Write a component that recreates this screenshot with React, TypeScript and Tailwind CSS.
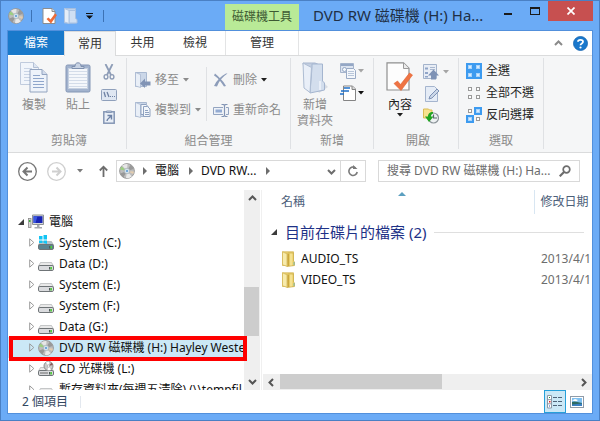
import { type ReactNode } from "react";

type IconProps = { className?: string };

function DiscIcon({ className = "" }: IconProps) {
  return (
    <svg viewBox="0 0 16 16" className={`size-4 shrink-0 ${className}`} aria-hidden="true">
      <circle cx="8" cy="8" r="7.4" fill="#bdbdbd" stroke="#959595" strokeWidth="0.9" />
      <path d="M8 8 3 2.600A7.200 7.200 0 0 1 8.500 1Z" fill="#e6e6e6" />
      <path d="M8 8 12.800 13.500A7.200 7.200 0 0 1 7 15Z" fill="#e9e9e9" />
      <path d="M8 8 11.500 1.800A7.200 7.200 0 0 1 14.800 6Z" fill="#999" />
      <path d="M8 8 1.300 10.500A7.200 7.200 0 0 0 4.500 14.200Z" fill="#979797" />
      <path d="M8 8 1.100 6.500A7 7 0 0 1 2.600 3.500Z" fill="#9ccf80" />
      <path d="M8 8 14.900 8.500A7 7 0 0 1 14.200 11Z" fill="#e3cdb0" />
      <circle cx="8" cy="8" r="2.800" fill="#d5e2ea" stroke="#9aa4aa" strokeWidth="0.6" />
      <circle cx="8" cy="8" r="1.100" fill="#5c9bd6" />
    </svg>
  );
}

function Caret({ className = "" }: IconProps) {
  return (
    <svg viewBox="0 0 6 4" className={`h-1 w-1.5 shrink-0 ${className}`} aria-hidden="true">
      <path d="M0 0h6L3 3.500Z" fill="currentColor" />
    </svg>
  );
}

function CopyIcon() {
  return (
    <svg viewBox="0 0 28 31" className="h-[31px] w-7" aria-hidden="true">
      <path d="M.5.500h13l5 5v17H.500Z" fill="#f1f5fb" stroke="#c0cbdd" />
      <path d="M13.500.500v5h5" fill="#dde5f1" stroke="#b4c1d6" />
      <path d="M4 6.500h8M4 9.500h11M4 12.500h6M4 15.500h6M4 18.500h6" stroke="#c9d4e5" />
      <path d="M10 7.500h12l5 5v17.500H10Z" fill="#eef3fa" stroke="#93a4c0" />
      <path d="M22 7.500v5h5" fill="#d2dcec" stroke="#93a4c0" />
      <path d="M13 13.500h7M13 16.500h11M13 19.500h11M13 22.500h11M13 25.500h11" stroke="#8fa6cb" />
    </svg>
  );
}

function PasteIcon() {
  return (
    <svg viewBox="0 0 26 31" className="h-[31px] w-[26px]" aria-hidden="true">
      <rect x="1" y="3" width="24" height="27" rx="1.500" fill="#a2b3ce" stroke="#8496b5" />
      <rect x="3.500" y="6.500" width="19" height="20" fill="#f4f7fb" stroke="#c5d0e0" />
      <path d="M4 9.500h18M4 12.500h18M4 15.500h18M4 18.500h18M4 21.500h18M4 24.500h18" stroke="#d3dce9" />
      <path d="M7 6.500V4.500h3C10 2 11 .8 13 .8s3 1.200 3 3.700h3v2Z" fill="#c8d3e4" stroke="#7e90ae" />
    </svg>
  );
}

function ScissorsIcon() {
  return (
    <svg viewBox="0 0 16 16" className="size-4" fill="none" aria-hidden="true">
      <path d="M4.500 0 10 11M11.500 0 6 11" stroke="#8e9db7" strokeWidth="1.800" />
      <ellipse cx="5" cy="12.800" rx="1.900" ry="2.200" stroke="#8e9db7" strokeWidth="1.400" />
      <ellipse cx="11" cy="12.800" rx="1.900" ry="2.200" stroke="#8e9db7" strokeWidth="1.400" />
    </svg>
  );
}

function PathIcon() {
  return (
    <svg viewBox="0 0 16 12" className="h-3 w-4" fill="none" aria-hidden="true">
      <rect x=".5" y=".5" width="15" height="11" rx="1" fill="#dfe7f2" stroke="#8fa0bb" />
      <path d="m3 3 1.500 5M6 3l2 5" stroke="#6f82a3" strokeWidth="1.300" />
      <path d="M9 7.500h1M11 7.500h1M13 7.500h1" stroke="#6f82a3" />
    </svg>
  );
}

function ShortcutIcon() {
  return (
    <svg viewBox="0 0 12 14" className="h-3.5 w-3" fill="none" aria-hidden="true">
      <rect x=".8" y="1.800" width="10.400" height="11.400" fill="#e8eef6" stroke="#8597b5" strokeWidth="1.500" />
      <path d="M3.500 2.500V1h5v1.500Z" fill="#c4d0e2" stroke="#8597b5" />
      <path d="M4.500 5.500h4v4M8.200 5.800 6 8c-1.500 1-2 1.500-2 3" stroke="#6d82a6" strokeWidth="1.400" />
    </svg>
  );
}

function MoveToIcon() {
  return (
    <svg viewBox="0 0 16 16" className="size-4 shrink-0" aria-hidden="true">
      <path d="M.5.500h11v14H.500Z" fill="#cbd7e8" stroke="#a9b9d1" />
      <path d="m.5.500 5 2v13l-5-1.500Z" fill="#e9eff7" stroke="#a9b9d1" strokeWidth=".8" />
      <path d="M5 11.500 10 6.500v3h5.500v4H10v2.500Z" fill="#8194b5" />
    </svg>
  );
}

function CopyToIcon() {
  return (
    <svg viewBox="0 0 16 16" className="size-4 shrink-0" aria-hidden="true">
      <path d="M.5.500h11v14H.500Z" fill="#cbd7e8" stroke="#a9b9d1" />
      <path d="m.5.500 5 2v13l-5-1.500Z" fill="#e9eff7" stroke="#a9b9d1" strokeWidth=".8" />
      <path d="M6 2.500h5l2 2v8H6Z" fill="#f5f8fc" stroke="#8fa2c0" />
      <path d="M8.500 4.500h4l2.500 2.500v7.500H8.500Z" fill="#f2f6fb" stroke="#8fa2c0" />
      <path d="M10 8.500h3M10 10.500h4M10 12.500h4" stroke="#8fa2c0" />
    </svg>
  );
}

function DeleteIcon() {
  return (
    <svg viewBox="0 0 16 16" className="size-4 shrink-0" aria-hidden="true">
      <path d="M2 1.500C5 4 10 8.500 13 14l-2 .5C8 9.500 4 5 1 3.500Z" fill="#8d9dba" />
      <path d="M14.500 1.500C10 4.500 6 9 4 14.500l-3-.5C3.500 8.500 8 4 13 1.500Z" fill="#8d9dba" />
    </svg>
  );
}

function RenameIcon() {
  return (
    <svg viewBox="0 0 16 13" className="h-[13px] w-4 shrink-0" fill="none" aria-hidden="true">
      <path d="M10 3.500H.500v7H10M13 3.500h2.500v7H13" fill="#eef2f8" stroke="#93a4c0" />
      <path d="M2.500 5.500H9v3H2.500Z" fill="#93abd2" />
      <path d="M8.500 .5h2l1 1 1-1h2M11.500 1v11M8.500 12.500h2l1-1 1 1h2" stroke="#8295b5" strokeWidth="1.200" />
    </svg>
  );
}

function NewFolderIcon() {
  return (
    <svg viewBox="0 0 27 33" className="h-[33px] w-[27px]" aria-hidden="true">
      <path d="m17 31 9-6-3-3-8 5Z" fill="#d8dce3" />
      <path d="M1 1h12l7 3v23l-14 2Z" fill="#c3cfe1" stroke="#a7b6ce" />
      <path d="M10 5V2h10.500v17l2 2v7L8 31Z" fill="#d3deed" stroke="#a4b5cf" />
      <path d="m1 1 8.500 4.500-1.500 25L2 26Z" fill="#e9eff8" stroke="#aebdd3" />
      <path d="M18 19v9" stroke="#f0f5fb" strokeWidth="1.500" />
    </svg>
  );
}

function NewItemIcon() {
  return (
    <svg viewBox="0 0 16 16" className="size-4 shrink-0" aria-hidden="true">
      <path d="M.5.500h13v9H.500Z" fill="#dce4f0" stroke="#a5b4cc" />
      <path d="M1 2h12" stroke="#94a7c5" strokeWidth="2" />
      <circle cx="4.500" cy="6.500" r="2" fill="#f5f8fb" stroke="#94a7c5" />
      <path d="M6.500 5.500h7l2 2v8h-9Z" fill="#f4f7fb" stroke="#9aabc6" />
      <path d="M8 8.500h6M8 10.500h6M8 12.500h6" stroke="#b8c6da" />
    </svg>
  );
}

function EasyAccessIcon() {
  return (
    <svg viewBox="0 0 16 16" className="size-4 shrink-0" aria-hidden="true">
      <path d="M3.500 1h9l3 3v11.500h-12Z" fill="#fff" stroke="#848484" />
      <path d="M12 1v3.500h3.500" fill="#d9d9d9" stroke="#848484" />
      <path d="M4 3h6M1 6h8M0 9h4" stroke="#1c6fc9" strokeWidth="1.600" />
    </svg>
  );
}

function PropertiesIcon() {
  return (
    <svg viewBox="0 0 28 30" className="h-[30px] w-7" aria-hidden="true">
      <path d="M1 .800h16.500l5.500 5.500V28H1Z" fill="#fdfdfd" stroke="#8f8f8f" strokeWidth="1.200" />
      <path d="M17.500 1v5.500H23" fill="#ececec" stroke="#9b9b9b" />
      <path d="M8 21.500 11.500 19l3 3.500L23.500 11l3 2L15 28.500Z" fill="#ee7444" stroke="#e2622f" strokeWidth=".6" />
    </svg>
  );
}

function OpenIcon() {
  return (
    <svg viewBox="0 0 16 16" className="size-4 shrink-0" aria-hidden="true">
      <path d="M.5.500h13v14H.500Z" fill="#e8edf5" stroke="#a3b3cb" />
      <path d="M2 3.500h3v2H2ZM2 8h3v2H2ZM2 12h3v1.500H2Z" fill="#90a5c8" />
      <path d="M7 3.500h5M7 5.500h5" stroke="#a9b8d0" />
      <path d="m10.500 5.500 5.500 6h-3v4H8v-4H5Z" fill="#7e92b5" />
    </svg>
  );
}

function EditIcon() {
  return (
    <svg viewBox="0 0 16 16" className="size-4 shrink-0" aria-hidden="true">
      <path d="M2.500.500h9l3 3v12h-12Z" fill="#e5ecf6" stroke="#a5b5ce" />
      <path d="m6 13 1-3 7-7 2 2-7 7Z" fill="#cbd7e8" stroke="#7e92b5" />
    </svg>
  );
}

function HistoryIcon() {
  return (
    <svg viewBox="0 0 16 16" className="size-4 shrink-0" aria-hidden="true">
      <path d="M.5 1h5l1 1H9v8H.500Z" fill="#f7e28f" stroke="#d9bb54" />
      <circle cx="10.500" cy="10" r="5" fill="#eef1f3" stroke="#8b9499" strokeWidth="1.200" />
      <path d="M10.500 6.500V10H14" fill="none" stroke="#5c676e" strokeWidth="1.200" />
      <path d="M10 4C6.500 4 5 6 5 8.500H2L6 14l4.500-5.500H8C8 7 8.500 6 10 5.500Z" fill="#20a520" />
    </svg>
  );
}

function SelectIcon({ on }: { on: [boolean, boolean, boolean, boolean] }) {
  const spots = [[0, 0], [8, 0], [0, 8], [8, 8]];
  return (
    <svg viewBox="0 0 16 16" className="size-4 shrink-0" aria-hidden="true">
      {spots.map(([x, y], i) => (
        <g key={i}>
          {on[i] ? <rect x={x} y={y} width="8" height="8" fill="#3d9bf0" /> : null}
          <rect x={x + 2.5} y={y + 2.5} width="3" height="3" fill={on[i] ? "#d8ecff" : "#fff"} stroke={on[i] ? "#a9d4fb" : "#9a9a9a"} />
        </g>
      ))}
    </svg>
  );
}

function ComputerIcon() {
  return (
    <svg viewBox="0 0 16 16" className="size-4 shrink-0" aria-hidden="true">
      <rect x=".5" y="4.500" width="2.500" height="9" fill="#d9d9d9" stroke="#8a8a8a" strokeWidth=".8" />
      <path d="M1 6h1.500v2H1Z" fill="#3db53d" />
      <path d="M4.500 1h11v9.500h-11Z" fill="#d4d7da" stroke="#8d9296" />
      <path d="M5.500 2.200h9V9h-9Z" fill="#1723b5" />
      <path d="M5.500 2.200h4L7.500 9h-2Z" fill="#3a57df" />
      <path d="M9 11h2.500v2H14v1.500H6.500V13H9Z" fill="#a5a9ad" />
    </svg>
  );
}

function DriveIcon({ kind }: { kind: "system" | "data" | "cd" | "net" }) {
  return (
    <svg viewBox="0 0 16 16" className="size-4 shrink-0" aria-hidden="true">
      <path d="M2.500 6.500h11l2 3.500H.500Z" fill={kind === "system" ? "#b7c5cb" : "#e9e9e9"} stroke="#a4a8aa" strokeWidth=".6" />
      <rect x=".5" y="9.500" width="15" height="5" rx="1.400" fill={kind === "system" ? "#5b8390" : "#dadbde"} stroke="#6f7477" />
      <path d="M11 11h1.500v2.500H11Z" fill="#4d5b57" />
      <path d="M12.500 11H14v2.500h-1.500Z" fill="#4fd436" />
      {kind === "system" ? <path d="M1 1h3.500v3.500H1ZM5.500 0h3.500v4.500H5.500ZM1 5.500h3.500V8H1ZM5.500 5.500h3.500V9L5.500 8Z" fill="#13c4f4" /> : null}
      {kind === "cd" ? (
        <g>
          <circle cx="10.500" cy="5" r="4.500" fill="#c9c9c9" stroke="#8b8b8b" />
          <path d="M10.500 5 8 1.200a4.500 4.500 0 0 1 3.500-.5ZM10.500 5l2.500 3.700a4.500 4.500 0 0 1-3.500.5Z" fill="#fff" />
          <path d="M10.500 5 13.500 1.700a4.500 4.500 0 0 1 1.300 2.300Z" fill="#8a5a5a" />
          <circle cx="10.500" cy="5" r="1.200" fill="#fff" stroke="#999" strokeWidth=".6" />
          <path d="M2 12h8" stroke="#6c6c6c" />
        </g>
      ) : null}
    </svg>
  );
}

function FolderIcon() {
  return (
    <svg viewBox="0 0 13 16" className="h-4 w-[13px] shrink-0" aria-hidden="true">
      <path d="M.5.800h11v13.700H.500Z" fill="#e9cf6c" stroke="#d5b654" strokeWidth=".8" />
      <path d="M6 2h5.500v8l1 1v3.500L5 15.500Z" fill="#f0d776" stroke="#cdb050" strokeWidth=".8" />
      <path d="m.5.800 4.500 2v12.500l-4.500-1.500Z" fill="#f7ebac" stroke="#d5b959" strokeWidth=".8" />
      <path d="M6.500 3v12" stroke="#cba63c" strokeWidth="1.500" />
      <path d="M9 2.500v12" stroke="#f9ecae" />
      <path d="M12 11v3" stroke="#7db5a5" />
    </svg>
  );
}

function Chevron({ dir }: { dir: "up" | "down" | "left" | "right" }) {
  const paths = { up: "M1 6 4.500 2.500 8 6", down: "M1 3l3.500 3.500L8 3", left: "M6 1 2.500 4.500 6 8", right: "M3 1l3.500 3.500L3 8" };
  return (
    <svg viewBox="0 0 9 9" className="size-[9px] shrink-0" aria-hidden="true">
      <path d={paths[dir]} fill="none" stroke="currentColor" strokeWidth="2" />
    </svg>
  );
}

function Crumb() {
  return (
    <svg viewBox="0 0 4 8" className="h-2 w-1 shrink-0" aria-hidden="true">
      <path d="M0 0v8l4-4Z" fill="#6d6d6d" />
    </svg>
  );
}

function OpenTriangle() {
  return (
    <svg viewBox="0 0 6 6" className="size-1.5 shrink-0" aria-hidden="true">
      <path d="M6 0v6H0Z" fill="#3c3c3c" />
    </svg>
  );
}

function Group({ label, className, children }: { label: string; className: string; children: ReactNode }) {
  return (
    <section aria-label={label} className={`flex shrink-0 flex-col border-r border-[#dfe1e4] ${className}`}>
      <div className="flex flex-1">{children}</div>
      <div className="text-center leading-4 text-[#8b8b8b]">{label}</div>
    </section>
  );
}

function BigButton({ icon, disabled = true, children }: { icon: ReactNode; disabled?: boolean; children: ReactNode }) {
  return (
    <button disabled={disabled} className="flex w-11 shrink-0 flex-col items-center self-start pt-1 leading-4 text-[#1e1e1e] disabled:text-[#8b8b8b]">
      <span className="flex h-[35px] items-start">{icon}</span>
      {children}
    </button>
  );
}

function TextButton({ icon, caret, disabled = true, children }: { icon: ReactNode; caret?: ReactNode; disabled?: boolean; children: ReactNode }) {
  return (
    <button disabled={disabled} className="flex items-center gap-1 whitespace-nowrap text-[#1e1e1e] disabled:text-[#8b8b8b]">
      {icon}
      {children}
      {caret}
    </button>
  );
}

const drives: { name: string; icon: ReactNode; selected?: boolean }[] = [
  { name: "System (C:)", icon: <DriveIcon kind="system" /> },
  { name: "Data (D:)", icon: <DriveIcon kind="data" /> },
  { name: "System (E:)", icon: <DriveIcon kind="data" /> },
  { name: "System (F:)", icon: <DriveIcon kind="data" /> },
  { name: "Data (G:)", icon: <DriveIcon kind="data" /> },
  { name: "DVD RW 磁碟機 (H:) Hayley Weste", icon: <DiscIcon />, selected: true },
  { name: "CD 光碟機 (L:)", icon: <DriveIcon kind="cd" /> },
  { name: "暫存資料夾(每週五清除) (\\\\tempfil", icon: <DriveIcon kind="net" /> },
];

const files = ["AUDIO_TS", "VIDEO_TS"];

function TitleBar() {
  return (
    <header className="flex h-[29px] shrink-0">
      <div className="flex w-[218px] shrink-0 items-center pl-px">
        <DiscIcon />
        <span className="ml-[7px] h-3 w-px bg-[#3c72b5]" />
        <button aria-label="內容" className="ml-2.5">
          <svg viewBox="0 0 16 16" className="size-4" aria-hidden="true">
            <path d="M1 .500h9l3 3v12H1Z" fill="#fff" stroke="#8d8d8d" />
            <path d="M10 .500v3h3" fill="#ddd" stroke="#8d8d8d" />
            <path d="m4.500 11 2-1.500 2 2L13 5.500l2 1.500-6 8.500Z" fill="#ee6b38" />
          </svg>
        </button>
        <button aria-label="新增資料夾" className="ml-1.5">
          <svg viewBox="0 0 14 16" className="h-4 w-3.5" aria-hidden="true">
            <path d="M.5.500h11V15H.500Z" fill="#c0d3ec" stroke="#a6bfe0" />
            <path d="M5 2.500h6.500v8l1.500 1V15H5Z" fill="#cfdff3" stroke="#a9c1e1" />
            <path d="m.5.500 4.500 2v13l-4.500-1.500Z" fill="#e4edf8" stroke="#adc4e2" />
          </svg>
        </button>
        <button aria-label="自訂快速存取工具列" className="ml-2">
          <svg viewBox="0 0 7 6" className="h-1.5 w-[7px]" aria-hidden="true">
            <path d="M0 0h7v1H0ZM0 2.500h7L3.500 6Z" fill="#111" />
          </svg>
        </button>
        <span className="ml-2.5 h-3 w-px bg-[#3c72b5]" />
      </div>
      <div className="mt-[3px] flex w-[74px] shrink-0 items-center justify-center bg-[#b9ea97] text-[#3d5a33]">磁碟機工具</div>
      <h1 className="min-w-0 flex-1 overflow-hidden pl-3.5 text-[15px] leading-[29px] whitespace-nowrap text-[#1f2f45]">DVD RW 磁碟機 (H:) Ha...</h1>
      <button aria-label="最小化" className="flex h-5 w-[27px] shrink-0 items-end justify-center pb-1.5">
        <span className="h-0.5 w-2 bg-[#1b1b1b]" />
      </button>
      <button aria-label="最大化" className="flex h-5 w-[27px] shrink-0 items-center justify-center">
        <span className="h-2 w-2.5 border border-t-2 border-[#1b1b1b]" />
      </button>
      <button aria-label="關閉" className="flex h-5 w-[45px] shrink-0 items-center justify-center bg-[#c75050]">
        <svg viewBox="0 0 8 8" className="size-2" aria-hidden="true">
          <path d="m.5.500 7 7M7.500.500l-7 7" stroke="#fff" strokeWidth="1.700" />
        </svg>
      </button>
    </header>
  );
}

function Tabs() {
  return (
    <nav className="flex h-[25px] shrink-0 text-[#333]">
      <button className="h-6 w-14 bg-[#1979ca] text-white">檔案</button>
      <button className="w-[52px] border border-b-0 border-[#dadbdc] bg-[#f5f6f7]">常用</button>
      <div className="flex flex-1 border-b border-[#dadbdc]">
        <button className="w-[53px]">共用</button>
        <button className="mr-1 w-[52px]">檢視</button>
        <button className="w-[74px] border-x border-[#e3e4e5]">管理</button>
        <div className="ml-auto flex items-center gap-2.5 pr-1">
          <button aria-label="最小化功能區" className="text-[#8a8a8a]"><Chevron dir="up" /></button>
          <button aria-label="說明">
            <svg viewBox="0 0 15 15" className="size-[15px]" aria-hidden="true">
              <circle cx="7.500" cy="7.500" r="7" fill="#1a78cc" stroke="#1565b0" strokeWidth=".8" />
              <path d="M5 5.800C5 3.200 10 3.200 10 5.800c0 1.700-2.500 1.600-2.500 3.500" fill="none" stroke="#fff" strokeWidth="1.800" />
              <circle cx="7.500" cy="11.500" r="1.100" fill="#fff" />
            </svg>
          </button>
        </div>
      </div>
    </nav>
  );
}

function Ribbon() {
  return (
    <div className="flex h-[97px] shrink-0 overflow-hidden border-b border-[#dadbdc] bg-[#f5f6f7] pt-0.5 pb-[3px]">
      <Group label="剪貼簿" className="w-[119px] pl-1">
        <BigButton icon={<CopyIcon />}>複製</BigButton>
        <BigButton icon={<PasteIcon />}>貼上</BigButton>
        <div className="flex w-[18px] flex-col items-center gap-[9px] pt-1.5">
          <button disabled aria-label="剪下"><ScissorsIcon /></button>
          <button disabled aria-label="複製路徑"><PathIcon /></button>
          <button disabled aria-label="貼上捷徑"><ShortcutIcon /></button>
        </div>
      </Group>
      <Group label="組合管理" className="w-[164px]">
        <div className="grid w-[79px] shrink-0 grid-rows-[30px_30px] pt-[7px] pl-2">
          <TextButton icon={<MoveToIcon />} caret={<Caret />}>移至</TextButton>
          <TextButton icon={<CopyToIcon />} caret={<Caret />}>複製到</TextButton>
        </div>
        <span className="mt-[9px] h-[54px] w-px shrink-0 bg-[#dfe1e4]" />
        <div className="grid grid-rows-[30px_30px] pt-[7px] pl-1.5">
          <TextButton disabled={false} icon={<DeleteIcon />} caret={<Caret />}>
            <span className="text-[#8b8b8b]">刪除</span>
          </TextButton>
          <TextButton icon={<RenameIcon />}>重新命名</TextButton>
        </div>
      </Group>
      <Group label="新增" className="w-[83px]">
        <div className="pl-0.5">
          <BigButton icon={<NewFolderIcon />}>
            新增
            <br />
            資料夾
          </BigButton>
        </div>
        <div className="flex flex-col gap-1.5 pt-[5px] pl-[3px]">
          <button disabled aria-label="新增項目" className="flex items-center gap-0.5 text-[#a5a5a5]"><NewItemIcon /><Caret /></button>
          <button aria-label="輕鬆存取" className="flex items-center gap-0.5"><EasyAccessIcon /><Caret /></button>
        </div>
      </Group>
      <Group label="開啟" className="w-[85px] pl-1">
        <BigButton disabled={false} icon={<PropertiesIcon />}>
          <span>內容</span>
          <Caret />
        </BigButton>
        <div className="flex flex-col gap-1.5 pt-1.5 pl-px">
          <button disabled aria-label="開啟" className="flex items-center gap-1 text-[#a5a5a5]"><OpenIcon /><Caret /></button>
          <button disabled aria-label="編輯"><EditIcon /></button>
          <button aria-label="歷程記錄"><HistoryIcon /></button>
        </div>
      </Group>
      <Group label="選取" className="w-[85px]">
        <div className="grid grid-rows-[22px_22px_22px] pt-0.5 pl-[7px]">
          <TextButton disabled={false} icon={<SelectIcon on={[true, true, true, true]} />}>全選</TextButton>
          <TextButton disabled={false} icon={<SelectIcon on={[false, false, false, false]} />}>全部不選</TextButton>
          <TextButton disabled={false} icon={<SelectIcon on={[false, true, true, false]} />}>反向選擇</TextButton>
        </div>
      </Group>
    </div>
  );
}

function AddressBar() {
  return (
    <div className="flex shrink-0 items-center pt-[7px] pr-3 pb-2 pl-2.5">
      <button aria-label="上一頁">
        <svg viewBox="0 0 19 19" className="size-[19px]" fill="none" stroke="#767676" aria-hidden="true">
          <circle cx="9.500" cy="9.500" r="8.800" strokeWidth="1.300" />
          <path d="M14 9.500H6M9.500 5.500l-4 4 4 4" strokeWidth="2" />
        </svg>
      </button>
      <button aria-label="下一頁" disabled className="ml-2.5">
        <svg viewBox="0 0 19 19" className="size-[19px]" fill="none" stroke="#cfcfcf" aria-hidden="true">
          <circle cx="9.500" cy="9.500" r="8.800" strokeWidth="1.300" />
          <path d="M5 9.500h8M9.500 5.500l4 4-4 4" strokeWidth="2" />
        </svg>
      </button>
      <button aria-label="最近的位置" className="ml-[11px] text-[#7a7a7a]"><Caret /></button>
      <button aria-label="上移" className="ml-4">
        <svg viewBox="0 0 9 12" className="h-3 w-[9px]" fill="none" stroke="#6d6d6d" aria-hidden="true">
          <path d="M4.500 12V1.500M.800 5.500 4.500 1.700l3.700 3.800" strokeWidth="1.800" />
        </svg>
      </button>
      <div className="ml-2 flex h-[22px] min-w-0 flex-1 items-center border border-[#d9d9d9] pl-0.5">
        <DiscIcon />
        <span className="ml-2 flex items-center"><Crumb /></span>
        <button className="ml-2">電腦</button>
        <span className="ml-2.5 flex items-center"><Crumb /></span>
        <button className="ml-2 whitespace-nowrap">DVD RW...</button>
        <span className="ml-2.5 flex items-center"><Crumb /></span>
        <button aria-label="先前的位置" className="ml-auto pr-1 text-[#6d6d6d]"><Chevron dir="down" /></button>
        <button aria-label="重新整理" className="flex h-full w-[25px] items-center justify-center border-l border-[#d9d9d9]">
          <svg viewBox="0 0 12 12" className="size-3" fill="none" stroke="#7a7a7a" aria-hidden="true">
            <path d="M8.500 2.800A4.200 4.200 0 1 0 10.200 7" strokeWidth="1.600" />
            <path d="M6 0v4h4.500Z" fill="#7a7a7a" stroke="none" />
          </svg>
        </button>
      </div>
      <form className="ml-3 flex h-[22px] w-[202px] shrink-0 items-center border border-[#d9d9d9] pr-2 pl-2">
        <input aria-label="搜尋" placeholder="搜尋 DVD RW 磁碟機 (H:) Ha..." className="min-w-0 flex-1 outline-none placeholder:text-[#6d6d6d]" />
        <button type="button" aria-label="開始搜尋">
          <svg viewBox="0 0 12 12" className="size-3" fill="none" stroke="#6d6d6d" aria-hidden="true">
            <circle cx="7.500" cy="4.500" r="3.300" strokeWidth="1.700" />
            <path d="m5 7-4.300 4.300" strokeWidth="2.200" />
          </svg>
        </button>
      </form>
    </div>
  );
}

function Tree() {
  return (
    <nav aria-label="資料夾" className="min-w-0 flex-1 overflow-hidden pt-[21px]">
      <button className="flex h-[21px] items-center pl-2.5">
        <OpenTriangle />
        <span className="mr-[5px] ml-1 flex"><ComputerIcon /></span>
        電腦
      </button>
      <ul>
        {drives.map((drive) => (
          <li key={drive.name}>
            <button aria-current={drive.selected} className={`flex h-[21px] w-full items-center pl-[21px] whitespace-nowrap ${drive.selected ? "bg-[#cbe8f6]" : ""}`}>
              <svg viewBox="0 0 6 9" className="h-[9px] w-1.5 shrink-0" aria-hidden="true">
                <path d="M.7.800v7.400l4.100-3.700Z" fill="none" stroke="#9a9a9a" />
              </svg>
              <span className="mr-[5px] ml-[3px] flex">{drive.icon}</span>
              {drive.name}
            </button>
          </li>
        ))}
      </ul>
    </nav>
  );
}

function FileList() {
  return (
    <main className="flex min-w-0 flex-1 flex-col overflow-hidden">
      <div className="min-h-0 flex-1 overflow-hidden">
        <table className="w-full table-fixed text-left whitespace-nowrap">
          <colgroup>
            <col />
            <col className="w-[58px]" />
          </colgroup>
          <thead>
            <tr className="text-[#4c607a]">
              <th className="relative h-6 pl-[18px] font-normal">
                名稱
                <svg viewBox="0 0 8 4" className="absolute top-0.5 left-1/2 h-1 w-2" aria-hidden="true">
                  <path d="M4 0 8 4H0Z" fill="#5b9fc0" />
                </svg>
              </th>
              <th className="h-6 border-l border-[#d8e6f2] pl-1.5 font-normal">修改日期</th>
            </tr>
          </thead>
          <tbody>
            <tr>
              <th colSpan={2} className="h-[34px] pt-0.5 pr-2 pl-2 text-[15px] font-normal text-[#1e3287]">
                <div className="flex items-center">
                  <OpenTriangle />
                  <span className="mr-2 ml-2">目前在碟片的檔案 (2)</span>
                  <span className="h-px flex-1 bg-[#dfdfdf]" />
                </div>
              </th>
            </tr>
            {files.map((file) => (
              <tr key={file}>
                <td className="h-[21px] pl-[19px]">
                  <span className="flex items-center gap-1.5">
                    <FolderIcon />
                    {file}
                  </span>
                </td>
                <td className="h-[21px] pl-[7px] text-[#6d6d6d]">2013/4/1</td>
              </tr>
            ))}
          </tbody>
        </table>
      </div>
      <div className="flex h-4 shrink-0 bg-[#efefef] text-[#555]">
        <button aria-label="向左捲動" className="flex w-[17px] items-center justify-center"><Chevron dir="left" /></button>
        <div className="flex flex-1"><div className="h-[15px] w-[55%] bg-[#cdcdcd]" /></div>
        <button aria-label="向右捲動" className="flex w-[17px] items-center justify-center"><Chevron dir="right" /></button>
      </div>
    </main>
  );
}

function StatusBar() {
  return (
    <footer className="flex h-[23px] shrink-0 items-center text-[#33475f]">
      <span className="pl-3.5">2 個項目</span>
      <span className="ml-3 h-3 w-px bg-[#e3e8ef]" />
      <button aria-label="詳細資料" className="ml-auto flex h-full w-[22px] items-center justify-center border border-[#26a0da] bg-[#cbe8f6]">
        <svg viewBox="0 0 16 14" className="h-3.5 w-4 shrink-0" aria-hidden="true">
          <path d="M.5.500h4v12.500h-4ZM.5 4.700h4M.5 8.800h4" fill="#fff" stroke="#8c98a5" />
          <path d="M2 2h1v1H2Z" fill="#2d8d2d" />
          <path d="M2 6h1.500v1.500H2Z" fill="#d22" />
          <path d="M2 10.500h1v1H2Z" fill="#2255bb" />
          <path d="M6 2.500h4M11 2.500h4M6 6.500h4M11 6.500h4M6 10.500h4M11 10.500h4" stroke="#4e6378" />
        </svg>
      </button>
      <button aria-label="大圖示" className="mr-2 ml-1">
        <svg viewBox="0 0 14 12" className="h-3 w-3.5" aria-hidden="true">
          <rect x=".5" y=".5" width="13" height="11" fill="#fff" stroke="#8f9ba8" />
          <path d="M2 2h10v5H2Z" fill="#7fc0f0" />
          <path d="M2 4.500 5 3l3 1-2 1.500Z" fill="#fff" />
          <path d="m2 6 3-.5 7 1.500v2H2Z" fill="#2d6b62" />
          <path d="M2 8.500 12 7.500V10H2Z" fill="#3a7fc0" />
        </svg>
      </button>
    </footer>
  );
}

export default function App() {
  return (
    <div className="flex h-screen flex-col border border-[#4a80c4] bg-[#6babf6] px-1.5 pb-1.5 font-['Noto_Sans','Noto_Sans_CJK_TC',sans-serif] text-[12px] leading-4 text-[#111]">
      <TitleBar />
      <div className="flex min-h-0 flex-1 flex-col border border-[#5290dc] bg-white">
        <Tabs />
        <Ribbon />
        <AddressBar />
        <div className="relative flex min-h-0 flex-1">
          <div className="flex w-[254px] shrink-0 border-r border-[#f0f0f0]">
            <Tree />
            <div className="flex w-4 shrink-0 flex-col items-center bg-[#efefef] text-[#555]">
              <button aria-label="向上捲動" className="flex h-[17px] items-center"><Chevron dir="up" /></button>
              <div className="flex w-full flex-1 flex-col">
                <div className="flex-[80]" />
                <div className="mr-px flex-[49] bg-[#cdcdcd]" />
                <div className="flex-[37]" />
              </div>
              <button aria-label="向下捲動" className="flex h-[17px] items-center"><Chevron dir="down" /></button>
            </div>
            <div className="w-px" />
          </div>
          <div className="w-px" />
          <FileList />
          <div className="pointer-events-none absolute top-[146px] left-px h-[25px] w-[238px] border-4 border-[#fe0000]" />
        </div>
        <StatusBar />
      </div>
    </div>
  );
}
